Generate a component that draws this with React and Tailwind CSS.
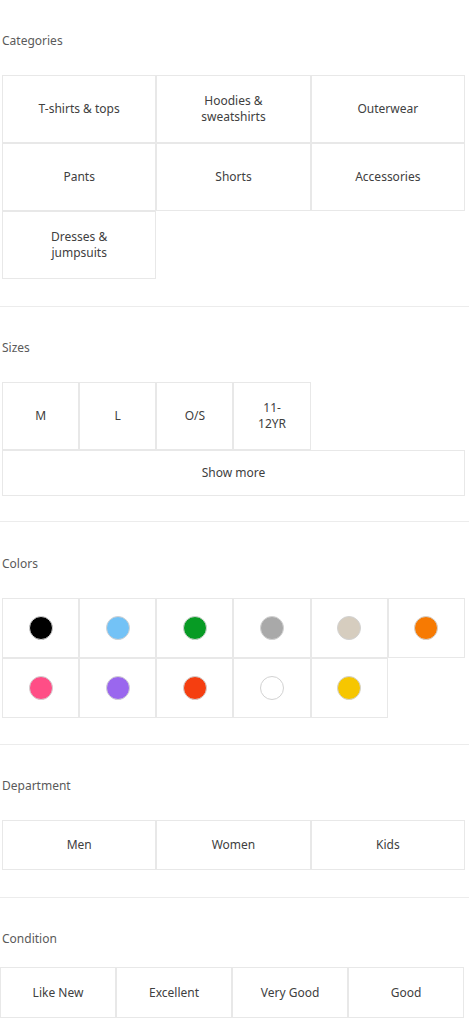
import React from "react";

const font = { fontFamily: '"Noto Sans", "Liberation Sans", sans-serif' };

function Cell({ children, className = "" }) {
  return (
    <div
      className={
        "flex items-center justify-center border border-[#e8e8e8] text-center text-[12px] leading-4 text-[#404040] " +
        className
      }
    >
      {children}
    </div>
  );
}

function Label({ children }) {
  return <div className="pl-[2px] text-[12px] leading-4 text-[#5a5a5a]">{children}</div>;
}

const colors = [
  "#000000",
  "#73c2f6",
  "#079b24",
  "#a9a9a9",
  "#d6cdbf",
  "#f77a02",
  "#ff4e86",
  "#9a67ee",
  "#f53e10",
  "#ffffff",
  "#f6c600",
];

export default function App() {
  return (
    <div className="w-[469px] bg-white" style={font}>
      {/* Categories */}
      <section className="border-b border-[#ececec] pt-[33px] pb-[27px]">
        <Label>Categories</Label>
        <div className="ml-[2px] mt-[26px] grid w-[463px] grid-cols-3">
          <Cell className="h-[68px]">T-shirts &amp; tops</Cell>
          <Cell className="h-[68px]">
            Hoodies &amp;
            <br />
            sweatshirts
          </Cell>
          <Cell className="h-[68px]">Outerwear</Cell>
          <Cell className="h-[68px]">Pants</Cell>
          <Cell className="h-[68px]">Shorts</Cell>
          <Cell className="h-[68px]">Accessories</Cell>
          <Cell className="h-[68px]">
            Dresses &amp;
            <br />
            jumpsuits
          </Cell>
        </div>
      </section>

      {/* Sizes */}
      <section className="border-b border-[#ececec] pt-[33px] pb-[25px]">
        <Label>Sizes</Label>
        <div className="ml-[2px] mt-[26px] grid w-[463px] grid-cols-6">
          <Cell className="h-[68px]">M</Cell>
          <Cell className="h-[68px]">L</Cell>
          <Cell className="h-[68px]">O/S</Cell>
          <Cell className="h-[68px]">
            11-
            <br />
            12YR
          </Cell>
          <div className="col-span-2" />
          <Cell className="col-span-6 h-[46px]">Show more</Cell>
        </div>
      </section>

      {/* Colors */}
      <section className="border-b border-[#ececec] pt-[34px] pb-[26px]">
        <Label>Colors</Label>
        <div className="ml-[2px] mt-[26px] grid w-[463px] grid-cols-6">
          {colors.map((c) => (
            <Cell key={c} className="h-[60px]">
              <span
                className="block h-[24px] w-[24px] rounded-full border border-[#d2d2d2]"
                style={{ backgroundColor: c }}
              />
            </Cell>
          ))}
        </div>
      </section>

      {/* Department */}
      <section className="border-b border-[#ececec] pt-[33px] pb-[27px]">
        <Label>Department</Label>
        <div className="ml-[2px] mt-[26px] grid w-[463px] grid-cols-3">
          <Cell className="h-[50px]">Men</Cell>
          <Cell className="h-[50px]">Women</Cell>
          <Cell className="h-[50px]">Kids</Cell>
        </div>
      </section>

      {/* Condition */}
      <section className="pt-[33px] pb-[6px]">
        <Label>Condition</Label>
        <div className="mt-[20px] grid w-[464px] grid-cols-4">
          <Cell className="h-[51px]">Like New</Cell>
          <Cell className="h-[51px]">Excellent</Cell>
          <Cell className="h-[51px]">Very Good</Cell>
          <Cell className="h-[51px]">Good</Cell>
        </div>
      </section>
    </div>
  );
}
